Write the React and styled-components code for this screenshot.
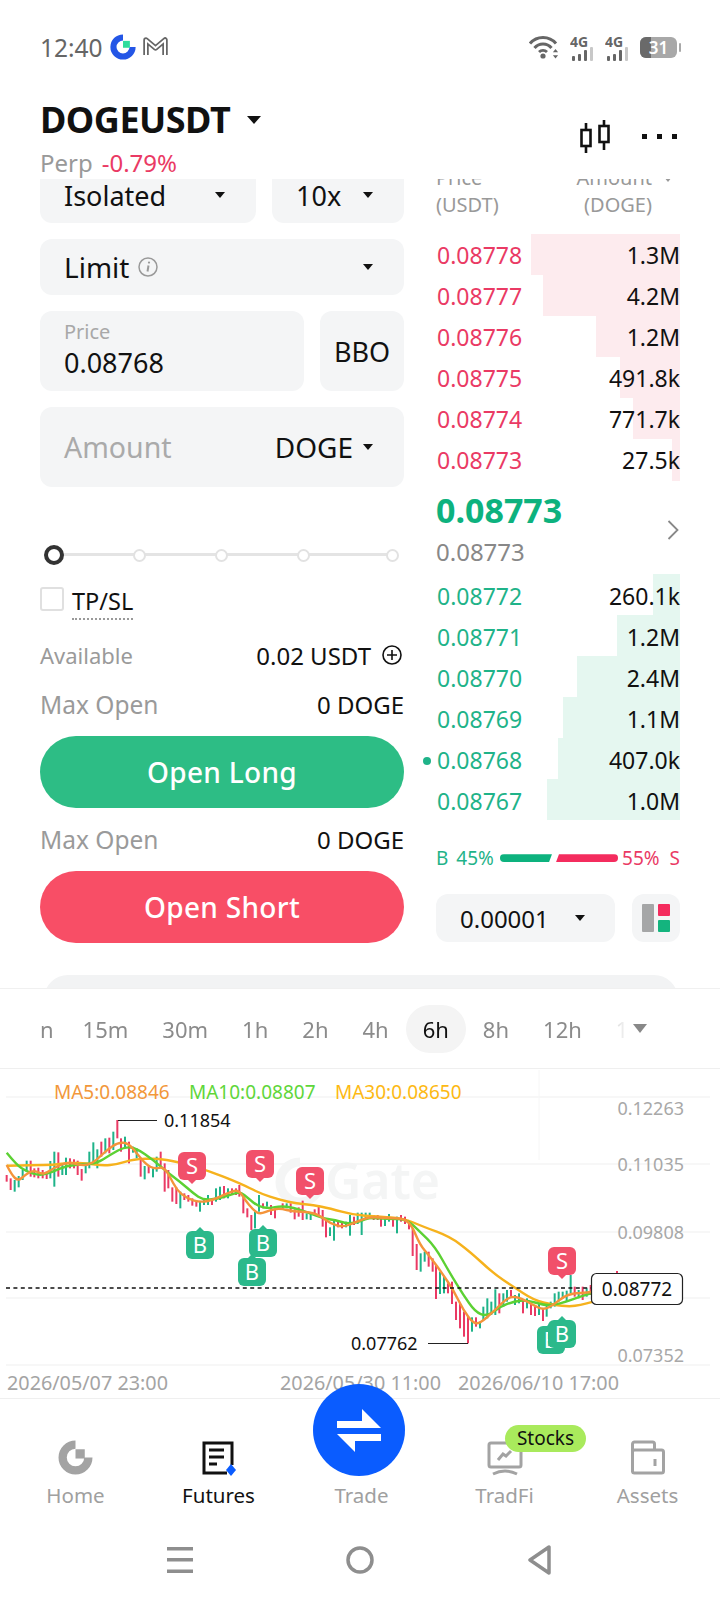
import React from 'react';
import styled, { createGlobalStyle } from 'styled-components';

const GREEN = '#1fb389';
const RED = '#ea3a64';

const GlobalStyle = createGlobalStyle`
  html, body { margin: 0; padding: 0; background: #fff; }
  body { font-family: "Noto Sans", "Open Sans", sans-serif; color: #111; }
  * { box-sizing: border-box; }
`;

const Page = styled.div`
  width: 720px;
  height: 1600px;
  overflow: hidden;
  display: flex;
  flex-direction: column;
  background: #fff;
`;

/* status bar */
const StatusBar = styled.div`
  height: 96px;
  flex: none;
  padding: 0 40px;
  display: flex;
  align-items: center;
  justify-content: space-between;
  padding-bottom: 2px;
`;
const StatusLeft = styled.div`
  display: flex;
  align-items: center;
  gap: 7px;
`;
const Clock = styled.span`
  font-size: 24.5px;
  color: #666;
`;
const StatusRight = styled.div`
  display: flex;
  align-items: center;
  gap: 11px;
  margin-right: 3px;
`;
const Battery = styled.div`
  position: relative;
  width: 37px;
  height: 21px;
  border-radius: 6px;
  background: #a8a8a8;
  color: #fff;
  font-size: 17px;
  font-weight: 600;
  line-height: 21px;
  text-align: center;
  &::after {
    content: '';
    position: absolute;
    right: -4px;
    top: 6px;
    width: 2px;
    height: 9px;
    border-radius: 1px;
    background: #a8a8a8;
  }
`;
const BatteryFill = styled.div`
  position: absolute;
  left: 0;
  top: 0;
  bottom: 0;
  width: 11px;
  border-radius: 6px 0 0 6px;
  background: #6a6a6a;
`;
const BatteryLabel = styled.span`
  position: relative;
`;

/* symbol header */
const Header = styled.div`
  height: 83px;
  flex: none;
  padding: 0 40px;
  display: flex;
  justify-content: space-between;
`;
const SymbolRow = styled.div`
  display: flex;
  align-items: center;
  gap: 17px;
  height: 48px;
`;
const Symbol = styled.div`
  font-size: 36px;
  font-weight: 700;
  letter-spacing: -0.5px;
  line-height: 48px;
`;
const PerpRow = styled.div`
  margin-top: 6px;
  font-size: 24px;
  line-height: 26px;
  color: #999;
  display: flex;
  gap: 9px;
`;
const Change = styled.span`
  color: ${RED};
`;
const HeaderActions = styled.div`
  display: flex;
  align-items: center;
  gap: 32px;
  height: 82px;
  margin-right: 3px;
`;

/* caret used all over */
const Caret = styled.span`
  display: inline-block;
  flex: none;
  width: 0;
  height: 0;
  border-left: ${p => p.$size}px solid transparent;
  border-right: ${p => p.$size}px solid transparent;
  border-top: ${p => p.$size * 1.25}px solid ${p => p.$color || '#111'};
`;

/* trade area */
const Main = styled.div`
  height: 809px;
  flex: none;
  overflow: hidden;
`;
const Columns = styled.div`
  display: flex;
  gap: 32px;
  padding: 0 40px;
  height: 764px;
`;
const FormColumn = styled.div`
  width: 364px;
  flex: none;
  margin-top: -12px;
`;
const Fields = styled.div`
  display: flex;
  flex-direction: column;
  gap: 16px;
`;
const FieldRow = styled.div`
  display: flex;
  gap: 16px;
`;
const Field = styled.div`
  flex: none;
  width: ${p => (p.$width ? `${p.$width}px` : 'auto')};
  height: ${p => p.$height}px;
  background: #f4f5f6;
  border-radius: 12px;
  padding: 0 31px 0 24px;
  font-size: 27px;
  display: flex;
  align-items: center;
  justify-content: space-between;
`;
const LimitLabel = styled.div`
  display: flex;
  align-items: center;
  gap: 9px;
  font-size: 28px;
`;
const PriceField = styled(Field)`
  flex-direction: column;
  align-items: flex-start;
  justify-content: center;
`;
const FieldHint = styled.div`
  font-size: 20px;
  line-height: 24px;
  color: #a8a8a8;
`;
const FieldValue = styled.div`
  font-size: 27px;
  line-height: 38px;
`;
const BboButton = styled(Field)`
  padding: 0;
  justify-content: center;
`;
const Placeholder = styled.span`
  color: #aaa;
  font-size: 28.5px;
`;
const UnitSelect = styled.div`
  display: flex;
  align-items: center;
  gap: 10px;
  font-size: 28px;
`;
const Slider = styled.div`
  position: relative;
  height: 20px;
  margin: 58px 4px 0 4px;
  display: flex;
  align-items: center;
  gap: 69px;
`;
const SliderTrack = styled.div`
  position: absolute;
  left: 4px;
  right: 8px;
  top: 8px;
  height: 3px;
  background: #e4e4e4;
`;
const SliderDot = styled.div`
  position: relative;
  width: 13px;
  height: 13px;
  margin-left: ${p => p.$nudge || 0}px;
  border-radius: 50%;
  background: #fff;
  border: 2px solid #e2e2e2;
`;
const SliderKnob = styled.div`
  position: relative;
  width: 20px;
  height: 20px;
  border-radius: 50%;
  background: #fff;
  border: 4px solid #333;
`;
const TpRow = styled.div`
  display: flex;
  margin-top: 22px;
  gap: 8px;
`;
const Checkbox = styled.div`
  width: 24px;
  height: 24px;
  border: 2px solid #e0e0e0;
  border-radius: 3px;
`;
const TpLabel = styled.div`
  font-size: 23.5px;
  line-height: 30px;
  padding-bottom: 4px;
  margin-top: -1px;
  height: 34px;
  border-bottom: 2px dotted #999;
`;
const InfoRow = styled.div`
  height: 30px;
  margin-top: ${p => p.$top}px;
  display: flex;
  align-items: center;
  justify-content: space-between;
  font-size: 24px;
`;
const InfoLabel = styled.span`
  color: #9a9a9a;
  font-size: ${p => p.$size}px;
`;
const InfoValue = styled.span`
  display: flex;
  align-items: center;
  gap: 11px;
`;
const PlusIcon = styled.svg`
  margin-right: 2px;
`;
const ActionButton = styled.div`
  height: 72px;
  margin-top: ${p => p.$top}px;
  border-radius: 36px;
  background: ${p => p.$bg};
  color: #fff;
  font-size: 28px;
  font-weight: 500;
  letter-spacing: 0.3px;
  display: flex;
  align-items: center;
  justify-content: center;
`;

/* order book */
const BookColumn = styled.div`
  width: 244px;
  flex: none;
  margin-top: -15px;
`;
const BookHead = styled.div`
  height: 70px;
  display: flex;
  justify-content: space-between;
  font-size: 20px;
  line-height: 27px;
  color: #999;
`;
const HeadRight = styled.div`
  text-align: right;
  padding-right: 28px;
`;
const HeadAmount = styled.div`
  position: relative;
`;
const HeadCaret = styled.span`
  position: absolute;
  right: -20px;
  top: 11px;
  line-height: 0;
`;
const BookRow = styled.div`
  position: relative;
  height: 41.1px;
  padding-top: ${p => p.$drop || 0}px;
  display: flex;
  align-items: center;
  justify-content: space-between;
  font-size: 23px;
`;
const Depth = styled.div`
  position: absolute;
  right: 0;
  top: 0;
  bottom: 0;
  background: ${p => p.$bg};
`;
const RowPrice = styled.span`
  position: relative;
  color: ${p => p.$color};
  margin-left: 1px;
`;
const RowAmount = styled.span`
  position: relative;
`;
const MarkDot = styled.span`
  position: absolute;
  left: -14px;
  top: 13px;
  width: 8px;
  height: 8px;
  border-radius: 50%;
  background: ${GREEN};
`;
const LastPrice = styled.div`
  position: relative;
  height: 93px;
`;
const BigPrice = styled.div`
  font-size: 34px;
  font-weight: 700;
  line-height: 44px;
  padding-top: 7px;
  color: #0db27e;
`;
const SubPrice = styled.div`
  font-size: 24px;
  line-height: 32px;
  margin-top: 4px;
  color: #888;
`;
const Chevron = styled.svg`
  position: absolute;
  right: 1px;
  top: 38px;
`;
const Pressure = styled.div`
  margin-top: 26px;
  height: 24px;
  display: flex;
  align-items: center;
  font-size: 19px;
  line-height: 24px;
`;
const PressureText = styled.span`
  flex: none;
  color: ${p => p.$color};
`;
const PressureSplit = styled.span`
  flex: none;
  width: ${p => p.$width}px;
`;
const PressureBuy = styled.div`
  flex: ${p => p.$share} 1 0;
  height: 8px;
  margin: 0 2px 0 6px;
  border-radius: 4px 0 0 4px;
  background: #0db27e;
  clip-path: polygon(0 0, 100% 0, calc(100% - 3px) 100%, 0 100%);
`;
const PressureSell = styled.div`
  flex: ${p => p.$share} 1 0;
  height: 8px;
  margin: 0 4px 0 2px;
  border-radius: 0 4px 4px 0;
  background: #f42c5e;
  clip-path: polygon(3px 0, 100% 0, 100% 100%, 0 100%);
`;
const BookTools = styled.div`
  margin-top: 24px;
  display: flex;
  justify-content: space-between;
`;
const StepSelect = styled.div`
  width: 179px;
  height: 48px;
  background: #f4f5f6;
  border-radius: 12px;
  font-size: 24px;
  padding: 0 30px 0 24px;
  display: flex;
  align-items: center;
  justify-content: space-between;
`;
const LayoutButton = styled.div`
  width: 48px;
  height: 48px;
  background: #f4f5f6;
  border-radius: 12px;
  display: flex;
  align-items: center;
  justify-content: center;
`;
const PeekCard = styled.div`
  height: 60px;
  margin: 32px 42px 0 44px;
  background: #f2f3f4;
  border-radius: 24px 24px 0 0;
`;

/* chart panel */
const ChartPanel = styled.div`
  height: 410px;
  flex: none;
  border-top: 1px solid #f0f0f0;
  background: #fff;
`;
const Intervals = styled.div`
  height: 80px;
  border-bottom: 1px solid #efefef;
  display: flex;
  align-items: center;
  padding-left: 40px;
  position: relative;
`;
const IntervalStrip = styled.div`
  width: 590px;
  display: flex;
  align-items: center;
  overflow: hidden;
  -webkit-mask-image: linear-gradient(to right, #000 92%, transparent 100%);
  mask-image: linear-gradient(to right, #000 92%, transparent 100%);
`;
const Interval = styled.div`
  flex: none;
  height: 48px;
  padding: 0 ${p => p.$pad}px;
  margin-left: ${p => p.$shift || 0}px;
  border-radius: 24px;
  font-size: 22px;
  line-height: 48px;
  color: ${p => (p.$active ? '#111' : '#8b8b8b')};
  background: ${p => (p.$active ? '#f4f4f4' : 'transparent')};
`;
const MoreCaret = styled.span`
  margin-left: 3px;
  line-height: 0;
`;
const ChartSvg = styled.svg`
  display: block;
  width: 720px;
  height: 329px;
  font-family: "Noto Sans", "Open Sans", sans-serif;
`;

/* tab bar */
const TabBar = styled.div`
  position: relative;
  height: 122px;
  flex: none;
  border-top: 1px solid #efefef;
  padding-left: 4px;
  display: grid;
  grid-template-columns: repeat(5, 143px);
  background: transparent;
`;
const TabItem = styled.div`
  position: relative;
  padding-top: 41px;
  display: flex;
  flex-direction: column;
  align-items: center;
  font-size: 20.5px;
  color: ${p => (p.$active ? '#111' : '#a0a0a0')};
`;
const TabIcon = styled.div`
  height: 36px;
  line-height: 0;
`;
const TabLabel = styled.div`
  margin-top: 3px;
  line-height: 32px;
`;
const TradeFab = styled.div`
  position: absolute;
  left: 313px;
  top: -15px;
  width: 92px;
  height: 92px;
  border-radius: 50%;
  background: #0a5cff;
  display: flex;
  align-items: center;
  justify-content: center;
`;
const StocksBadge = styled.div`
  position: absolute;
  left: 72px;
  top: 26px;
  width: 81px;
  height: 27px;
  border-radius: 14px;
  background: #a9ea5c;
  color: #111;
  font-size: 19px;
  line-height: 27px;
  text-align: center;
`;

/* android nav */
const SystemBar = styled.div`
  height: 80px;
  flex: none;
  display: grid;
  grid-template-columns: 180px 180px 180px;
  justify-content: center;
  align-items: center;
  justify-items: center;
`;

/* data */
const asks = [
  ['0.08778', '1.3M', 149],
  ['0.08777', '4.2M', 137],
  ['0.08776', '1.2M', 84],
  ['0.08775', '491.8k', 60],
  ['0.08774', '771.7k', 47],
  ['0.08773', '27.5k', 8],
];
const bids = [
  ['0.08772', '260.1k', 27],
  ['0.08771', '1.2M', 63],
  ['0.08770', '2.4M', 103],
  ['0.08769', '1.1M', 117],
  ['0.08768', '407.0k', 122, true],
  ['0.08767', '1.0M', 133],
];
const intervals = ['15m', '30m', '1h', '2h', '4h', '6h', '8h', '12h', '1d'];

// candles read off the picture: x, top, bottom, r/g. first block is x/3, 1100+y/3
const candlesA = [
  [20,225,245,'r'],[32,235,270,'r'],[44,240,275,'g'],[56,228,262,'g'],[68,210,240,'g'],[80,182,215,'g'],[92,182,230,'r'],
  [103,205,232,'r'],[115,203,235,'r'],[128,210,235,'r'],[140,215,237,'r'],[151,183,235,'g'],[163,155,260,'g'],[175,157,230,'r'],
  [187,195,225,'g'],[198,173,225,'g'],[210,175,205,'r'],[222,178,205,'r'],[233,182,225,'r'],[245,207,242,'r'],[257,190,220,'g'],
  [268,155,205,'g'],[280,127,195,'g'],[292,148,205,'g'],[304,125,170,'r'],[316,115,160,'g'],[328,113,160,'r'],[340,95,150,'g'],
  [352,60,115,'r'],[363,115,155,'r'],[375,110,145,'g'],[387,125,190,'r'],[399,140,158,'g'],[410,145,175,'g'],[422,180,230,'r'],
  [434,198,238,'g'],[446,198,220,'r'],[459,205,232,'g'],[470,170,215,'g'],[482,155,205,'r'],[494,190,275,'r'],[505,210,265,'r'],
  [517,262,305,'r'],[529,262,312,'r'],[541,275,325,'g'],[553,280,300,'r'],[565,285,305,'r'],[577,295,317,'r'],[589,300,320,'r'],
  [600,305,335,'g'],[612,295,315,'g'],[624,285,315,'g'],[636,295,315,'r'],[648,265,305,'g'],[660,260,300,'g'],[672,258,295,'r'],
  [684,265,295,'g'],[696,265,285,'r'],[708,265,285,'r'],[718,255,290,'r'],[730,285,340,'r'],[742,325,352,'r'],[754,345,390,'r'],
  [765,335,385,'g'],[777,285,335,'g'],[789,310,325,'r'],[801,305,320,'g'],[813,315,345,'r'],[825,325,355,'r'],
];
// second block is 280+x/3, 1120+y/3
const candlesB = [
  [8,250,268,'r'],[20,250,265,'g'],[32,250,278,'r'],[44,268,298,'r'],[56,262,290,'r'],[68,242,300,'r'],[80,280,298,'g'],[92,280,300,'g'],
  [104,268,285,'r'],[116,255,290,'r'],[128,270,320,'r'],[138,300,352,'r'],[150,322,348,'g'],[162,300,362,'g'],[174,303,322,'r'],
  [186,305,325,'r'],[198,305,322,'g'],[210,285,347,'g'],[222,290,315,'r'],[233,278,312,'g'],[245,278,345,'g'],[257,278,300,'g'],
  [269,278,295,'g'],[281,285,300,'r'],[293,285,300,'r'],[303,290,320,'r'],[315,292,318,'g'],[327,282,305,'g'],[339,295,320,'r'],
  [351,290,340,'g'],[363,285,305,'r'],[375,290,312,'r'],[387,305,328,'r'],[398,325,408,'r'],[410,372,450,'r'],[422,400,455,'g'],
  [434,395,425,'g'],[446,395,440,'r'],[458,415,455,'r'],[468,435,537,'r'],[480,455,522,'g'],[492,470,520,'g'],[504,490,520,'r'],
  [516,485,552,'r'],[528,545,600,'r'],[540,552,625,'r'],[552,575,650,'r'],[564,590,670,'r'],[576,592,635,'g'],[588,592,620,'r'],
  [600,605,625,'g'],[610,560,600,'g'],[622,535,595,'g'],[634,545,585,'g'],[646,508,585,'g'],[658,520,580,'r'],[670,520,560,'g'],
  [681,510,545,'g'],[693,510,530,'r'],[705,525,555,'g'],[717,520,550,'g'],[729,540,580,'r'],[741,535,565,'g'],[753,550,585,'r'],
  [765,560,588,'r'],[777,550,585,'g'],[789,565,603,'r'],[800,555,590,'g'],[812,545,565,'g'],[824,520,560,'g'],[836,515,545,'g'],
  [848,515,535,'g'],[860,512,545,'g'],[872,465,520,'g'],[884,500,530,'r'],[896,510,535,'g'],[908,500,540,'r'],[920,505,530,'g'],[932,495,525,'r'],[944,500,525,'g'],
];
const candles = [
  ...candlesA.map(([x, t, b, c]) => [x / 3, 1100 + t / 3, 1100 + b / 3, c]),
  ...candlesB.map(([x, t, b, c]) => [280 + x / 3, 1120 + t / 3, 1120 + b / 3, c]),
];

const toA = pts => pts.map(([x, y]) => [x / 3, 1100 + y / 3]);
const toB = pts => pts.map(([x, y]) => [280 + x / 3, 1120 + y / 3]);

const ma5 = [
  ...toA([[20,195],[35,225],[55,243],[75,225],[100,210],[125,222],[140,218],[160,205],[205,185],[235,195],[265,195],[290,180],[320,150],[355,127],[385,130],[410,160],[440,195],[465,207],[490,200],[510,230],[530,270],[560,295],[600,307],[640,300],[680,280],[715,268],[735,300],[760,330],[780,343],[810,330]]),
  ...toB([[0,265],[40,275],[90,275],[125,290],[150,310],[190,322],[230,305],[270,290],[320,295],[370,295],[395,315],[420,375],[450,410],[490,465],[520,510],[550,570],[580,610],[600,610],[640,575],[680,535],[710,528],[760,555],[790,570],[820,555],[850,530],[880,520],[900,520],[940,515]]),
];
const ma10 = [
  ...toA([[20,158],[50,195],[80,215],[120,227],[160,215],[200,197],[250,193],[290,190],[330,165],[375,140],[410,145],[460,180],[500,215],[540,245],[580,280],[610,300],[650,297],[690,285],[720,275],[745,295],[775,320],[810,325]]),
  ...toB([[0,258],[40,262],[90,280],[130,295],[165,300],[205,312],[240,305],[270,292],[320,297],[380,297],[420,335],[465,380],[510,460],[550,525],[585,575],[620,590],[660,560],[700,545],[740,540],[790,555],[820,555],[860,545],[900,530],[940,518]]),
];
const ma30 = [
  ...toA([[20,197],[100,195],[160,195],[210,188],[260,190],[310,197],[350,193],[400,178],[470,175],[530,185],[620,210],[720,250],[780,280]]),
  ...toB([[0,240],[50,250],[100,255],[150,265],[220,285],[290,290],[370,295],[430,320],[510,350],[570,395],[640,460],[700,500],[760,540],[820,555],[870,560],[900,555],[940,545]]),
];

// midpoint smoothing so the averages don't look like polylines
const smooth = pts => {
  let d = `M${pts[0][0].toFixed(1)} ${pts[0][1].toFixed(1)}`;
  for (let i = 1; i < pts.length - 1; i++) {
    const mx = (pts[i][0] + pts[i + 1][0]) / 2;
    const my = (pts[i][1] + pts[i + 1][1]) / 2;
    d += ` Q${pts[i][0].toFixed(1)} ${pts[i][1].toFixed(1)} ${mx.toFixed(1)} ${my.toFixed(1)}`;
  }
  const last = pts[pts.length - 1];
  return d + ` L${last[0].toFixed(1)} ${last[1].toFixed(1)}`;
};

const GateMark = ({ size, color, square }) => (
  <svg width={size} height={size} viewBox="0 0 34 34">
    <path d="M17 4.5 A12.5 12.5 0 1 0 29.5 17" fill="none" stroke={color} strokeWidth="8" />
    <rect x="17" y="9" width="9" height="9" fill={square} />
  </svg>
);

const Marker = ({ x, y, label }) => {
  const sell = label === 'S';
  const fill = sell ? '#f1506a' : '#2bb98b';
  const tip = sell
    ? `M${x + 9} ${y + 27}L${x + 14} ${y + 32}L${x + 19} ${y + 27}Z`
    : `M${x + 9} ${y + 1}L${x + 14} ${y - 4}L${x + 19} ${y + 1}Z`;
  return (
    <g>
      <rect x={x} y={y} width="28" height="28" rx="6" fill={fill} />
      <path d={tip} fill={fill} />
      <text x={x + 14} y={y + 22} textAnchor="middle" fontSize="22" fill="#fff">{label}</text>
    </g>
  );
};

const PriceChart = () => (
  <ChartSvg viewBox="0 1069 720 329">
    {[1097, 1164, 1232, 1298, 1365].map(y => (
      <line key={y} x1="6" x2="710" y1={y} y2={y} stroke="#f5f5f5" strokeWidth="1.5" />
    ))}
    <line x1="539" x2="539" y1="1070" y2="1160" stroke="#f6f6f6" />
    <g fill="#f4f5f5">
      <path d="M300 1162 A20 20 0 1 0 320 1182" fill="none" stroke="#f4f5f5" strokeWidth="9" />
      <text x="325" y="1199" fontSize="50" fontWeight="600">Gate</text>
    </g>

    {candles.map(([x, t, b, c], i) => (
      <rect key={i} x={x - 1} y={t} width="2" height={b - t} fill={c === 'r' ? RED : GREEN} />
    ))}
    <rect x="616" y="1271" width="2" height="3" fill={RED} />

    <path d={smooth(ma30)} fill="none" stroke="#f6b21d" strokeWidth="2.4" />
    <path d={smooth(ma10)} fill="none" stroke="#5cd133" strokeWidth="2.4" />
    <path d={smooth(ma5)} fill="none" stroke="#f4943a" strokeWidth="2.4" />

    <text x="54" y="1099" fontSize="19" fill="#f2973a">MA5:0.08846</text>
    <text x="189" y="1099" fontSize="19" fill="#5fd63a">MA10:0.08807</text>
    <text x="335" y="1099" fontSize="19" fill="#fdb913">MA30:0.08650</text>

    <line x1="118" x2="157" y1="1120.5" y2="1120.5" stroke="#222" />
    <text x="164" y="1127" fontSize="18" fill="#111">0.11854</text>
    <line x1="428" x2="468" y1="1343.5" y2="1343.5" stroke="#222" />
    <text x="351" y="1350" fontSize="18" fill="#111">0.07762</text>

    <line x1="6" x2="592" y1="1288" y2="1288" stroke="#111" strokeWidth="1.3" strokeDasharray="4 3.4" />

    <Marker x={178} y={1152} label="S" />
    <Marker x={246} y={1150} label="S" />
    <Marker x={296} y={1167} label="S" />
    <Marker x={548} y={1247} label="S" />
    <Marker x={186} y={1231} label="B" />
    <Marker x={249} y={1229} label="B" />
    <Marker x={238} y={1258} label="B" />
    <Marker x={537} y={1326} label="B" />
    <Marker x={548} y={1320} label="B" />

    <g fontSize="18" fill="#a8a8a8" textAnchor="end">
      <text x="684" y="1115">0.12263</text>
      <text x="684" y="1171">0.11035</text>
      <text x="684" y="1239">0.09808</text>
      <text x="684" y="1362">0.07352</text>
    </g>
    <rect x="591.5" y="1273.5" width="91" height="31" rx="5" fill="#fff" stroke="#222" strokeWidth="1.2" />
    <text x="637" y="1296" fontSize="19" fill="#111" textAnchor="middle">0.08772</text>

    <g fontSize="19.8" fill="#a4a4a4">
      <text x="7" y="1390">2026/05/07 23:00</text>
      <text x="280" y="1390">2026/05/30 11:00</text>
      <text x="458" y="1390">2026/06/10 17:00</text>
    </g>
  </ChartSvg>
);

const WifiIcon = () => (
  <svg width="30" height="24" viewBox="0 0 30 24" fill="none" stroke="#666" strokeWidth="3">
    <path d="M1 8.5 A17 17 0 0 1 27 8.5" />
    <path d="M5.5 13 A11 11 0 0 1 22.5 13" />
    <path d="M10 17 A6 6 0 0 1 18 17" />
    <circle cx="14" cy="21" r="2.6" fill="#666" stroke="none" />
    <path d="M26.5 14l-2.6 3.2h5.2zM26.5 23.5l-2.6-3.2h5.2z" fill="#666" stroke="none" />
  </svg>
);

const SignalIcon = () => (
  <svg width="24" height="28" viewBox="0 -4 24 28">
    <text x="0" y="10" fontSize="14" fontWeight="700" fill="#666" fontFamily="Noto Sans">4G</text>
    <rect x="2" y="19" width="3" height="5" rx="1" fill="#666" />
    <rect x="8" y="17" width="3" height="7" rx="1" fill="#666" />
    <rect x="14" y="13" width="3" height="11" rx="1" fill="#666" />
    <rect x="20" y="10" width="3" height="14" rx="1" fill="#c8c8c8" />
  </svg>
);

export default function App() {
  return (
    <Page>
      <GlobalStyle />
      <StatusBar>
        <StatusLeft>
          <Clock>12:40</Clock>
          <GateMark size={26} color="#2456e6" square="#2fdc9d" />
          <svg width="25" height="20" viewBox="0 0 25 20">
            <path d="M3 18V3l9.5 8L22 3v15" fill="none" stroke="#666" strokeWidth="5.5" strokeLinejoin="round" />
            <path d="M3 18V3l9.5 8L22 3v15" fill="none" stroke="#fff" strokeWidth="2" strokeLinejoin="round" />
          </svg>
        </StatusLeft>
        <StatusRight>
          <WifiIcon />
          <SignalIcon />
          <SignalIcon />
          <Battery>
            <BatteryFill />
            <BatteryLabel>31</BatteryLabel>
          </Battery>
        </StatusRight>
      </StatusBar>

      <Header>
        <div>
          <SymbolRow>
            <Symbol>DOGEUSDT</Symbol>
            <Caret $size={7} />
          </SymbolRow>
          <PerpRow>
            <span>Perp</span>
            <Change>-0.79%</Change>
          </PerpRow>
        </div>
        <HeaderActions>
          <svg width="30" height="34" viewBox="0 0 30 34" fill="none" stroke="#111" strokeWidth="2.6">
            <rect x="1.5" y="10" width="9" height="16" />
            <rect x="19.5" y="6" width="9" height="16" />
            <path d="M6 3v7M6 26v7M24 0v6M24 22v8" />
          </svg>
          <svg width="35" height="6" viewBox="0 0 35 6" fill="#111">
            <rect x="0" y="0" width="5" height="5" />
            <rect x="15" y="0" width="5" height="5" />
            <rect x="30" y="0" width="5" height="5" />
          </svg>
        </HeaderActions>
      </Header>

      <Main>
        <Columns>
          <FormColumn>
            <Fields>
              <FieldRow>
                <Field $height={56} $width={216}>
                  <span>Isolated</span>
                  <Caret $size={5.5} />
                </Field>
                <Field $height={56} $width={132}>
                  <span>10x</span>
                  <Caret $size={5.5} />
                </Field>
              </FieldRow>
              <Field $height={56}>
                <LimitLabel>
                  <span>Limit</span>
                  <svg width="20" height="20" viewBox="0 0 20 20" fill="none" stroke="#999" strokeWidth="1.5">
                    <circle cx="10" cy="10" r="9" />
                    <path d="M10.5 8.5l-1 6" strokeWidth="2" />
                    <circle cx="11" cy="5.6" r="1.1" fill="#999" stroke="none" />
                  </svg>
                </LimitLabel>
                <Caret $size={5.5} />
              </Field>
              <FieldRow>
                <PriceField $height={80} $width={264}>
                  <FieldHint>Price</FieldHint>
                  <FieldValue>0.08768</FieldValue>
                </PriceField>
                <BboButton $height={80} $width={84}>BBO</BboButton>
              </FieldRow>
              <Field $height={80}>
                <Placeholder>Amount</Placeholder>
                <UnitSelect>
                  <span>DOGE</span>
                  <Caret $size={5} />
                </UnitSelect>
              </Field>
            </Fields>

            <Slider>
              <SliderTrack />
              <SliderKnob />
              <SliderDot />
              <SliderDot />
              <SliderDot />
              <SliderDot $nudge={7} />
            </Slider>

            <TpRow>
              <Checkbox />
              <TpLabel>TP/SL</TpLabel>
            </TpRow>

            <InfoRow $top={20}>
              <InfoLabel $size={22}>Available</InfoLabel>
              <InfoValue>
                <span>0.02 USDT</span>
                <PlusIcon width="20" height="20" viewBox="0 0 20 20" fill="none" stroke="#111" strokeWidth="1.6">
                  <circle cx="10" cy="10" r="9" />
                  <path d="M5 10h10M10 5v10" />
                </PlusIcon>
              </InfoValue>
            </InfoRow>
            <InfoRow $top={19}>
              <InfoLabel $size={24.5}>Max Open</InfoLabel>
              <InfoValue>0 DOGE</InfoValue>
            </InfoRow>
            <ActionButton $top={17} $bg="#2dbd85">Open Long</ActionButton>
            <InfoRow $top={16}>
              <InfoLabel $size={24.5}>Max Open</InfoLabel>
              <InfoValue>0 DOGE</InfoValue>
            </InfoRow>
            <ActionButton $top={17} $bg="#f84e66">Open Short</ActionButton>
          </FormColumn>

          <BookColumn>
            <BookHead>
              <div>
                <div>Price</div>
                <div>(USDT)</div>
              </div>
              <HeadRight>
                <HeadAmount>
                  Amount
                  <HeadCaret><Caret $size={4} $color="#999" /></HeadCaret>
                </HeadAmount>
                <div>(DOGE)</div>
              </HeadRight>
            </BookHead>

            {asks.map(([price, amount, depth]) => (
              <BookRow key={price}>
                <Depth $bg="#fdebee" style={{ width: depth }} />
                <RowPrice $color={RED}>{price}</RowPrice>
                <RowAmount>{amount}</RowAmount>
              </BookRow>
            ))}

            <LastPrice>
              <BigPrice>0.08773</BigPrice>
              <SubPrice>0.08773</SubPrice>
              <Chevron width="12" height="22" viewBox="0 0 12 22" fill="none" stroke="#888" strokeWidth="1.8">
                <path d="M1.5 2l9 9-9 9" />
              </Chevron>
            </LastPrice>

            {bids.map(([price, amount, depth, mark]) => (
              <BookRow key={price} $drop={3}>
                <Depth $bg="#e5f7f0" style={{ width: depth }} />
                <RowPrice $color={GREEN}>
                  {mark && <MarkDot />}
                  {price}
                </RowPrice>
                <RowAmount>{amount}</RowAmount>
              </BookRow>
            ))}

            <Pressure>
              <PressureText $color={GREEN}>B</PressureText>
              <PressureSplit $width={8} />
              <PressureText $color={GREEN}>45%</PressureText>
              <PressureBuy $share={52} />
              <PressureSell $share={62} />
              <PressureText $color={RED}>55%</PressureText>
              <PressureSplit $width={10} />
              <PressureText $color={RED}>S</PressureText>
            </Pressure>

            <BookTools>
              <StepSelect>
                <span>0.00001</span>
                <Caret $size={5.5} />
              </StepSelect>
              <LayoutButton>
                <svg width="28" height="28" viewBox="0 0 28 28">
                  <rect x="0" y="0" width="12" height="28" rx="1" fill="#a5a6a7" />
                  <rect x="16" y="0" width="12" height="12" rx="1" fill="#f42c5e" />
                  <rect x="16" y="16" width="12" height="12" rx="1" fill="#14b47e" />
                </svg>
              </LayoutButton>
            </BookTools>
          </BookColumn>
        </Columns>
        <PeekCard />
      </Main>

      <ChartPanel>
        <Intervals>
          <IntervalStrip>
            <Interval $pad={17} $shift={-17}>n</Interval>
            <Interval $pad={17} $shift={-5}>{intervals[0]}</Interval>
            {intervals.slice(1).map(tab => (
              <Interval key={tab} $pad={17} $active={tab === '6h'}>{tab}</Interval>
            ))}
          </IntervalStrip>
          <MoreCaret><Caret $size={7.5} $color="#888" /></MoreCaret>
        </Intervals>
        <PriceChart />
      </ChartPanel>

      <TabBar>
        <TabItem>
          <TabIcon><GateMark size={35} color="#a3a3a3" square="#a3a3a3" /></TabIcon>
          <TabLabel>Home</TabLabel>
        </TabItem>
        <TabItem $active>
          <TabIcon>
            <svg width="36" height="36" viewBox="0 0 36 36" fill="none">
              <path d="M31 25V3H3v30h23" stroke="#111" strokeWidth="3" />
              <path d="M8 10h15M8 17h15M8 24h8" stroke="#111" strokeWidth="3" />
              <path d="M30 24l5 6-5 6-5-6z" fill="#0a5cff" />
            </svg>
          </TabIcon>
          <TabLabel>Futures</TabLabel>
        </TabItem>
        <TabItem>
          <TabIcon />
          <TabLabel>Trade</TabLabel>
        </TabItem>
        <TabItem>
          <TabIcon>
            <svg width="36" height="36" viewBox="0 0 36 36" fill="none" stroke="#a3a3a3" strokeWidth="3">
              <rect x="2" y="3" width="32" height="24" rx="2" />
              <path d="M6 34 Q18 28 30 34" />
              <path d="M11 20l5-6 3 2 5-5" strokeWidth="3" />
            </svg>
          </TabIcon>
          <TabLabel>TradFi</TabLabel>
          <StocksBadge>Stocks</StocksBadge>
        </TabItem>
        <TabItem>
          <TabIcon>
            <svg width="36" height="36" viewBox="0 0 36 36" fill="none" stroke="#a3a3a3" strokeWidth="3">
              <path d="M2.5 32V4a2 2 0 0 1 2-2h18a2 2 0 0 1 2 2v7" />
              <rect x="2.5" y="10" width="31" height="23" rx="2" />
              <path d="M25 19v7" />
            </svg>
          </TabIcon>
          <TabLabel>Assets</TabLabel>
        </TabItem>
        <TradeFab>
          <svg width="44" height="44" viewBox="0 0 44 44" fill="#fff">
            <path d="M0 13h25V1l19 19H0z" />
            <path d="M44 26v7H18v11L0 26z" />
          </svg>
        </TradeFab>
      </TabBar>

      <SystemBar>
        <svg width="26" height="28" viewBox="0 0 26 28" fill="#8e8e8e">
          <rect x="0" y="1" width="26" height="3.5" />
          <rect x="0" y="12" width="26" height="3.5" />
          <rect x="0" y="23.5" width="26" height="3.5" />
        </svg>
        <svg width="28" height="28" viewBox="0 0 28 28" fill="none" stroke="#8e8e8e" strokeWidth="3.5">
          <circle cx="14" cy="14" r="12" />
        </svg>
        <svg width="24" height="30" viewBox="0 0 24 30" fill="none" stroke="#8e8e8e" strokeWidth="3.5" strokeLinejoin="round">
          <path d="M21 2v26L2 15z" />
        </svg>
      </SystemBar>
    </Page>
  );
}
